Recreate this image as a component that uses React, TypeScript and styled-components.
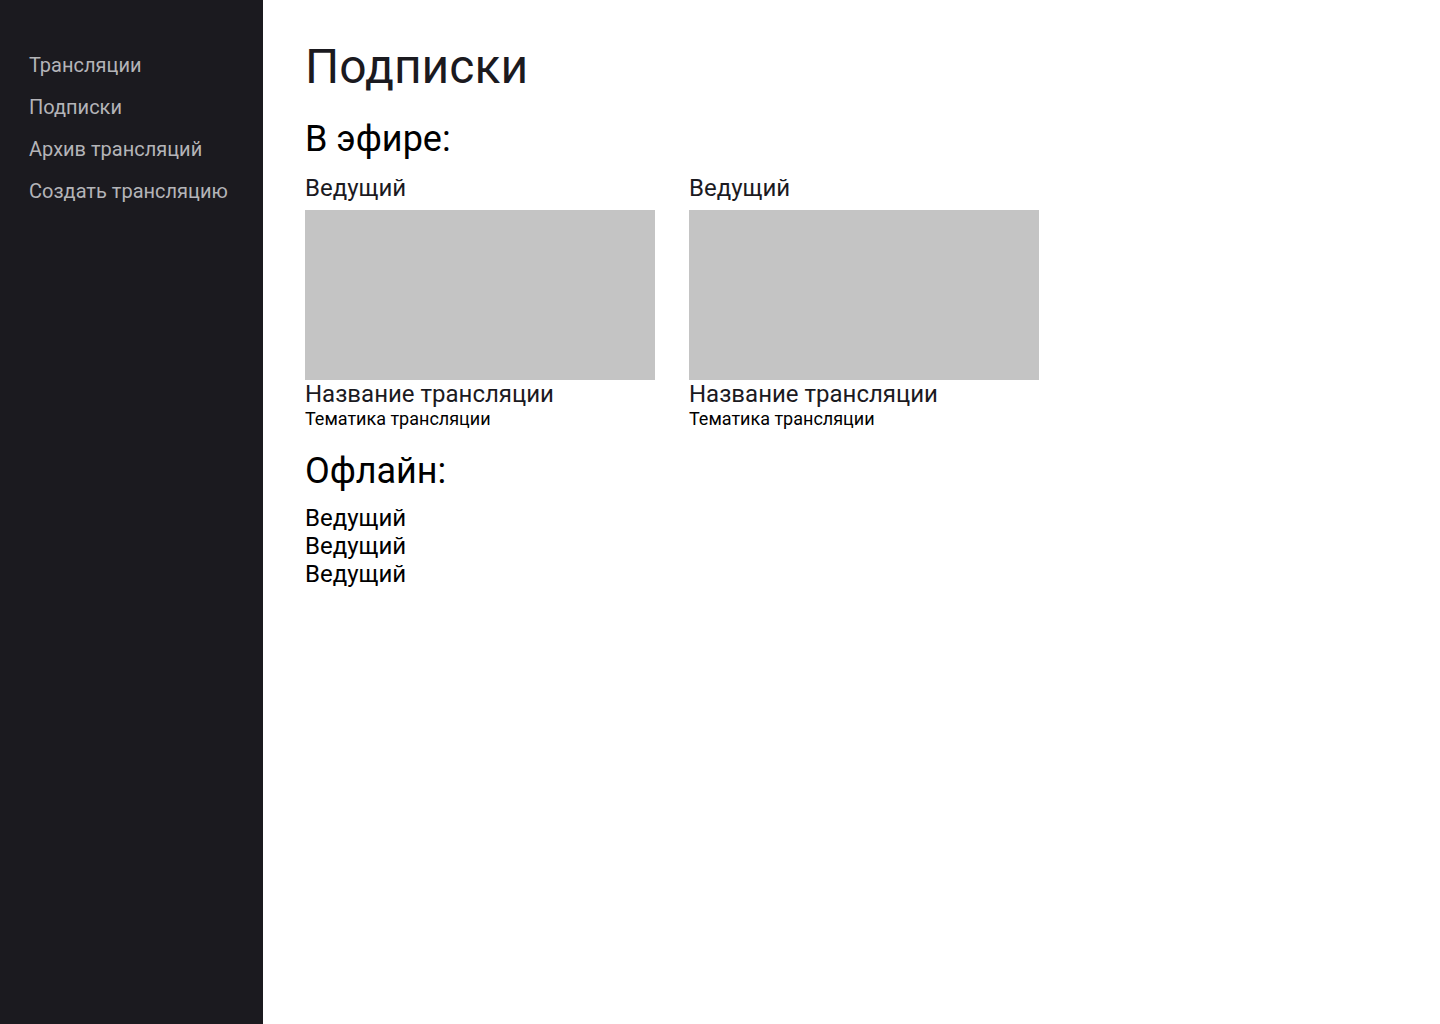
import React from "react";
import styled, { createGlobalStyle } from "styled-components";

const GlobalStyle = createGlobalStyle`
  html, body {
    margin: 0;
    padding: 0;
    background: #ffffff;
    font-family: Roboto, "Noto Sans", sans-serif;
  }
  * { box-sizing: border-box; }
`;

const Layout = styled.div`
  display: flex;
  min-height: 1024px;
`;

const Sidebar = styled.nav`
  width: 263px;
  flex-shrink: 0;
  background: #1b1a1f;
  padding: 51px 0 0 29px;
  display: flex;
  flex-direction: column;
  gap: 14px;
`;

const NavItem = styled.a`
  font-size: 20px;
  line-height: 28px;
  color: #b4b4b8;
  text-decoration: none;
  cursor: pointer;
`;

const Main = styled.main`
  flex: 1;
  padding: 39px 0 0 42px;
  display: flex;
  flex-direction: column;
`;

const Title = styled.h1`
  margin: 0;
  font-size: 48px;
  font-weight: 400;
  line-height: 56px;
  color: #1b1a1f;
`;

const SectionTitle = styled.h2<{ $top: number }>`
  margin: ${(p) => p.$top}px 0 0;
  font-size: 36px;
  font-weight: 400;
  line-height: 42px;
  color: #000;
`;

const Streams = styled.div`
  display: flex;
  gap: 34px;
  margin-top: 14px;
`;

const Card = styled.div`
  width: 350px;
  display: flex;
  flex-direction: column;
`;

const Host = styled.div`
  font-size: 24px;
  line-height: 28px;
  color: #1b1a1f;
  margin-bottom: 8px;
`;

const Thumb = styled.div`
  width: 350px;
  height: 170px;
  background: #c4c4c4;
`;

const StreamName = styled.div`
  font-size: 24px;
  line-height: 28px;
  color: #1b1a1f;
`;

const Topic = styled.div`
  font-size: 18px;
  line-height: 22px;
  color: #000;
`;

const OfflineList = styled.div`
  display: flex;
  flex-direction: column;
  margin-top: 12px;
`;

const OfflineHost = styled.div`
  font-size: 24px;
  line-height: 28px;
  color: #000;
`;

const navItems = ["Трансляции", "Подписки", "Архив трансляций", "Создать трансляцию"];

export default function App() {
  return (
    <>
      <GlobalStyle />
      <Layout>
        <Sidebar>
          {navItems.map((n) => (
            <NavItem key={n}>{n}</NavItem>
          ))}
        </Sidebar>
        <Main>
          <Title>Подписки</Title>
          <SectionTitle $top={23}>В эфире:</SectionTitle>
          <Streams>
            {[0, 1].map((i) => (
              <Card key={i}>
                <Host>Ведущий</Host>
                <Thumb />
                <StreamName>Название трансляции</StreamName>
                <Topic>Тематика трансляции</Topic>
              </Card>
            ))}
          </Streams>
          <SectionTitle $top={20}>Офлайн:</SectionTitle>
          <OfflineList>
            {[0, 1, 2].map((i) => (
              <OfflineHost key={i}>Ведущий</OfflineHost>
            ))}
          </OfflineList>
        </Main>
      </Layout>
    </>
  );
}
